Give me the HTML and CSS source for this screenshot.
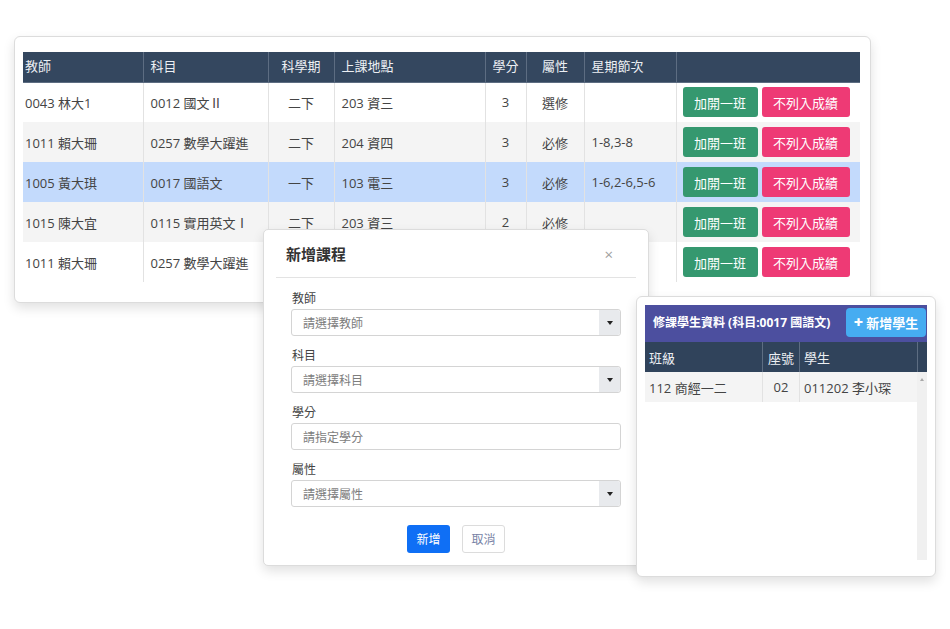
FILE: index.html
```html
<!DOCTYPE html>
<html lang="zh-Hant">
<head>
    <meta charset="UTF-8">
    <meta name="viewport" content="width=device-width, initial-scale=1.0">
    <title>課程管理</title>
    <link rel="stylesheet" href="styles.css">
</head>
<body>
    <div class="stage">

        <!-- Course list -->
        <div class="window course-card">
            <table class="course-table">
                <colgroup>
                    <col style="width:120px"><col style="width:125px"><col style="width:66px"><col style="width:151px">
                    <col style="width:41px"><col style="width:58px"><col style="width:92px"><col style="width:184px">
                </colgroup>
                <thead>
                    <tr>
                        <th class="first">教師</th>
                        <th>科目</th>
                        <th class="center">科學期</th>
                        <th>上課地點</th>
                        <th class="center">學分</th>
                        <th class="center">屬性</th>
                        <th>星期節次</th>
                        <th></th>
                    </tr>
                </thead>
                <tbody>
                    <tr>
                        <td class="first">0043 林大1</td>
                        <td>0012 國文Ⅱ</td>
                        <td class="center">二下</td>
                        <td>203 資三</td>
                        <td class="center">3</td>
                        <td class="center">選修</td>
                        <td></td>
                        <td class="actions"><button class="btn btn-green">加開一班</button><button class="btn btn-pink">不列入成績</button></td>
                    </tr>
                    <tr class="striped">
                        <td class="first">1011 賴大珊</td>
                        <td>0257 數學大躍進</td>
                        <td class="center">二下</td>
                        <td>204 資四</td>
                        <td class="center">3</td>
                        <td class="center">必修</td>
                        <td>1-8,3-8</td>
                        <td class="actions"><button class="btn btn-green">加開一班</button><button class="btn btn-pink">不列入成績</button></td>
                    </tr>
                    <tr class="selected">
                        <td class="first">1005 黃大琪</td>
                        <td>0017 國語文</td>
                        <td class="center">一下</td>
                        <td>103 電三</td>
                        <td class="center">3</td>
                        <td class="center">必修</td>
                        <td>1-6,2-6,5-6</td>
                        <td class="actions"><button class="btn btn-green">加開一班</button><button class="btn btn-pink">不列入成績</button></td>
                    </tr>
                    <tr class="striped">
                        <td class="first">1015 陳大宜</td>
                        <td>0115 實用英文Ⅰ</td>
                        <td class="center">二下</td>
                        <td>203 資三</td>
                        <td class="center">2</td>
                        <td class="center">必修</td>
                        <td></td>
                        <td class="actions"><button class="btn btn-green">加開一班</button><button class="btn btn-pink">不列入成績</button></td>
                    </tr>
                    <tr>
                        <td class="first">1011 賴大珊</td>
                        <td>0257 數學大躍進</td>
                        <td class="center">二下</td>
                        <td>204 資四</td>
                        <td class="center">3</td>
                        <td class="center">必修</td>
                        <td></td>
                        <td class="actions"><button class="btn btn-green">加開一班</button><button class="btn btn-pink">不列入成績</button></td>
                    </tr>
                </tbody>
            </table>
        </div>

        <!-- Add course dialog -->
        <div class="window modal">
            <div class="modal-header">
                <h2>新增課程</h2>
                <span class="close">×</span>
            </div>
            <div class="modal-body">
                <div class="field">
                    <label>教師</label>
                    <div class="select"><span>請選擇教師</span><i class="caret"></i></div>
                </div>
                <div class="field">
                    <label>科目</label>
                    <div class="select"><span>請選擇科目</span><i class="caret"></i></div>
                </div>
                <div class="field">
                    <label>學分</label>
                    <div class="input"><span>請指定學分</span></div>
                </div>
                <div class="field">
                    <label>屬性</label>
                    <div class="select"><span>請選擇屬性</span><i class="caret"></i></div>
                </div>
                <div class="modal-actions">
                    <button class="btn btn-blue">新增</button>
                    <button class="btn btn-light">取消</button>
                </div>
            </div>
        </div>

        <!-- Students panel -->
        <div class="window student-panel">
            <div class="panel-bar">
                <span class="panel-title">修課學生資料 (科目:0017 國語文)</span>
                <button class="btn btn-sky"><b class="plus">+</b>新增學生</button>
            </div>
            <div class="student-head">
                <div class="c-class">班級</div>
                <div class="c-seat">座號</div>
                <div class="c-name">學生</div>
                <div class="c-gutter"></div>
            </div>
            <div class="student-scroll">
                <div class="student-rows">
                    <div class="student-row">
                        <div class="c-class">112 商經一二</div>
                        <div class="c-seat">02</div>
                        <div class="c-name">011202 李小琛</div>
                    </div>
                </div>
                <div class="scrollbar"><span class="arrow"></span></div>
            </div>
        </div>

    </div>
</body>
</html>
```

FILE: styles.css
```css
* {
    box-sizing: border-box;
}

body {
    margin: 0;
    background: #ffffff;
    font-family: "Open Sans", "Noto Sans CJK TC", sans-serif;
    color: #444444;
}

.stage {
    position: relative;
    width: 950px;
    height: 629px;
    overflow: hidden;
}

/* floating windows */
.window {
    position: absolute;
    background: #ffffff;
    border: 1px solid #dcdcdc;
    border-radius: 6px;
    box-shadow: 0 5px 12px rgba(0, 0, 0, 0.12);
}

.course-card {
    left: 14px;
    top: 36px;
    width: 857px;
    height: 267px;
    padding: 15px 0 0 8px;
    z-index: 1;
}

.course-table {
    width: 837px;
    border-collapse: collapse;
    table-layout: fixed;
    font-size: 13px;
}

.course-table th {
    height: 30px;
    background: #34475f;
    color: #eceff3;
    font-weight: normal;
    text-align: left;
    padding: 0 7px 2px 7px;
    border-left: 1px solid #5d6d82;
    border-bottom: 1px solid #5d6d82;
}

.course-table td {
    height: 40px;
    padding: 0 7px;
    border-left: 1px solid #e2e2e2;
    color: #444444;
    white-space: nowrap;
}

.course-table th.first,
.course-table td.first {
    padding-left: 2px;
    border-left: none;
}

.course-table .center {
    text-align: center;
}

.course-table tr.striped td {
    background: #f4f4f4;
}

.course-table tr.selected td {
    background: #c3dafc;
}

.course-table td.actions {
    padding: 0 0 0 6px;
}

.btn {
    font-family: inherit;
    font-size: 13px;
    border: none;
    border-radius: 3px;
    color: #ffffff;
    cursor: pointer;
    padding: 0;
}

.actions .btn {
    height: 30px;
    vertical-align: middle;
}

.btn-green {
    width: 75px;
    background: #35986f;
    margin-right: 4px;
}

.btn-pink {
    width: 88px;
    background: #ee3a75;
}

/* dialog */
.modal {
    left: 263px;
    top: 229px;
    width: 386px;
    height: 337px;
    border-radius: 5px;
    z-index: 2;
}

.modal-header {
    height: 48px;
    margin: 0 12px;
    padding: 0 10px;
    border-bottom: 1px solid #e3e3e3;
    display: flex;
    align-items: center;
    justify-content: space-between;
}

.modal-header h2 {
    margin: 0;
    font-size: 15px;
    font-weight: bold;
    color: #333333;
}

.close {
    color: #a0a0a0;
    font-size: 15px;
    margin-right: 13px;
}

.modal-body {
    padding: 13px 27px 0 27px;
}

.field {
    margin-bottom: 12px;
}

.field label {
    display: block;
    font-size: 12px;
    line-height: 16px;
    margin-bottom: 2px;
    padding-left: 1px;
    color: #444444;
}

.select, .input {
    height: 27px;
    border: 1px solid #d4d4d4;
    border-radius: 3px;
    display: flex;
    align-items: center;
    font-size: 12px;
    color: #7d7d7d;
}

.select span, .input span {
    flex: 1;
    padding-left: 11px;
}

.caret {
    width: 21px;
    align-self: stretch;
    background: #e8eaed;
    border-radius: 0 3px 3px 0;
    display: flex;
    align-items: center;
    justify-content: center;
}

.caret::after {
    content: "";
    border-left: 3px solid transparent;
    border-right: 3px solid transparent;
    border-top: 4px solid #222222;
}

.modal-actions {
    display: flex;
    justify-content: center;
    gap: 12px;
    margin-top: 18px;
}

.modal-actions .btn {
    height: 28px;
    width: 43px;
    font-size: 12px;
}

.btn-blue {
    background: #0f6ff5;
}

.btn-light {
    background: #ffffff;
    border: 1px solid #dcdcdc;
    color: #7883a6;
}

/* students panel */
.student-panel {
    left: 636px;
    top: 296px;
    width: 300px;
    height: 281px;
    padding: 8px 8px 0 8px;
    z-index: 3;
}

.panel-bar {
    height: 37px;
    background: #4c4f9f;
    display: flex;
    align-items: center;
    justify-content: space-between;
    padding: 0 1px 3px 8px;
}

.panel-title {
    color: #ffffff;
    font-size: 12px;
    font-weight: bold;
}

.btn-sky {
    width: 80px;
    height: 29px;
    background: #46acf1;
    font-size: 13px;
    font-weight: bold;
    border-radius: 4px;
}

.plus {
    font-size: 16px;
    margin-right: 3px;
}

.student-head, .student-row {
    display: flex;
    font-size: 13px;
}

.student-head {
    height: 30px;
    background: #30435b;
    color: #eceff3;
}

.student-head > div, .student-row > div {
    display: flex;
    align-items: center;
    padding-left: 4px;
}

.student-head > div + div {
    border-left: 1px solid #5d6d82;
}

.c-class {
    width: 117px;
}

.c-seat {
    width: 37px;
    justify-content: center;
    padding-left: 0 !important;
}

.c-name {
    width: 118px;
}

.c-gutter {
    width: 10px;
}

.student-scroll {
    display: flex;
    height: 188px;
}

.student-rows {
    width: 272px;
}

.student-row {
    height: 30px;
    background: #f4f4f4;
    color: #444444;
}

.student-row > div + div {
    border-left: 1px solid #e2e2e2;
}

.scrollbar {
    width: 10px;
    background: #f0f0f0;
    display: flex;
    justify-content: center;
    padding-top: 6px;
}

.arrow {
    width: 0;
    height: 0;
    border-left: 2px solid transparent;
    border-right: 2px solid transparent;
    border-bottom: 3px solid #a8a8a8;
}
```
